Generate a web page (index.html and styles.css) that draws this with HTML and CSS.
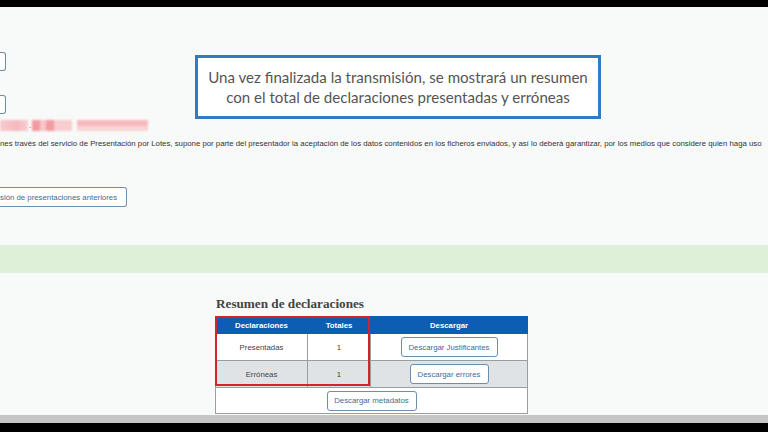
FILE: index.html
```html
<!DOCTYPE html>
<html lang="es">
<head>
<meta charset="utf-8">
<title>Presentación por Lotes</title>
<link rel="stylesheet" href="styles.css">
</head>
<body>
<div class="topbar"></div>
<main class="page">
  <div class="field field-1"></div>
  <div class="field field-2"></div>
  <div class="redacted">
    <span class="blur b1"></span><span class="dot">.</span><span class="blur b2"></span><span class="blur b3"></span>
  </div>
  <p class="notice">nes través del servicio de Presentación por Lotes, supone por parte del presentador la aceptación de los datos contenidos en los ficheros enviados, y así lo deberá garantizar, por los medios que considere quien haga uso</p>
  <button class="btn btn-prev">sión de presentaciones anteriores</button>
  <div class="success-band"></div>
  <section class="summary">
    <h2 class="summary-title">Resumen de declaraciones</h2>
    <div class="table-wrap">
      <table class="summary-table">
        <thead>
          <tr><th class="c1">Declaraciones</th><th class="c2">Totales</th><th class="c3">Descargar</th></tr>
        </thead>
        <tbody>
          <tr class="row-a"><td>Presentadas</td><td>1</td><td><button class="btn btn-table">Descargar Justificantes</button></td></tr>
          <tr class="row-b"><td>Erróneas</td><td>1</td><td><button class="btn btn-table">Descargar errores</button></td></tr>
          <tr class="row-c"><td colspan="3"><button class="btn btn-table">Descargar metadatos</button></td></tr>
        </tbody>
      </table>
      <div class="highlight"></div>
    </div>
  </section>
  <div class="callout"><span class="callout-line">Una vez finalizada la transmisión, se mostrará un resumen</span><span class="callout-line">con el total de declaraciones presentadas y erróneas</span></div>
</main>
<div class="scrollbar"></div>
<div class="bottombar"></div>
</body>
</html>
```

FILE: styles.css
```css
* { box-sizing: border-box; }
html, body { margin: 0; padding: 0; }
body {
  width: 768px;
  height: 432px;
  overflow: hidden;
  background: #f8f9f9;
  font-family: "Liberation Sans", Arial, sans-serif;
  color: #444;
}
.topbar { height: 7px; background: #000; }
.page {
  position: relative;
  height: 408px;
  display: flex;
  flex-direction: column;
  align-items: flex-start;
}
.field {
  width: 6px;
  height: 19px;
  border: 1px solid #6f8aa6;
  border-left: none;
  border-radius: 0 3px 3px 0;
  background: #fff;
}
.field-1 { margin-top: 45px; }
.field-2 { margin-top: 24px; }
.redacted {
  margin-top: 6px;
  height: 11px;
  display: flex;
  align-items: center;
}
.blur { display: block; height: 11px; background: #f6c3c6; filter: blur(1.2px); }
.b1 { width: 28px; background: linear-gradient(90deg, #f7cccf, #f4b9bd 60%, #f7cfd1); }
.dot { font-size: 8px; color: #555; width: 4px; line-height: 11px; padding-left: 1px; }
.b2 { width: 40px; background: linear-gradient(90deg, #f29aa0 0 20%, #f6c6c9 20% 35%, #f29ca1 35% 55%, #f7cdd0 55%); }
.b3 { width: 71px; margin-left: 5px; background: linear-gradient(180deg, #f5b9bd 0 55%, #f8d4d6 55%); }
.notice {
  margin: 8px 0 0;
  font-size: 7.8px;
  line-height: 10px;
  white-space: nowrap;
  color: #333;
}
.btn {
  font-family: "Liberation Sans", Arial, sans-serif;
  background: #fff;
  border: 1px solid #6d8fae;
  border-radius: 3px;
  color: #3f6b97;
  font-size: 7.8px;
  padding: 0;
  height: 20px;
  white-space: nowrap;
  cursor: pointer;
}
.btn-prev {
  margin-top: 38px;
  width: 127px;
  border-left: none;
  border-radius: 0 3px 3px 0;
  text-align: left;
  padding-left: 0;
}
.success-band {
  margin-top: 38px;
  width: 100%;
  height: 28px;
  background: #dff0d8;
}
.summary {
  margin-left: 215px;
  margin-top: 23px;
}
.summary-title {
  margin: 0 0 4px 1px;
  font-family: "Liberation Serif", "Times New Roman", serif;
  font-weight: bold;
  font-size: 13.2px;
  line-height: 16px;
  color: #444;
}
.table-wrap { position: relative; }
.summary-table {
  border-collapse: collapse;
  width: 313px;
  table-layout: fixed;
  font-size: 7.8px;
}
.summary-table th {
  background: #0c5db3;
  color: #fff;
  font-weight: bold;
  height: 17px;
  padding: 0;
  border: 1px solid #0c5db3;
}
.c1 { width: 92px; }
.c2 { width: 63px; }
.summary-table td {
  border: 1px solid #9a9ea3;
  text-align: center;
  padding: 0;
  color: #444;
}
.row-a td, .row-b td { height: 27px; }
.row-c td { height: 26px; background: #fff; }
.row-a td { background: #fff; }
.row-b td { background: #dfe3e6; }
.btn-table { height: 20px; vertical-align: middle; }
.row-a .btn-table { width: 97px; }
.row-b .btn-table { width: 79px; }
.row-c .btn-table { width: 90px; }
.highlight {
  position: absolute;
  left: 0;
  top: 0;
  width: 155px;
  height: 70px;
  border: 2px solid #d3232e;
  pointer-events: none;
}
.callout {
  position: absolute;
  left: 195px;
  top: 48px;
  width: 406px;
  height: 64px;
  border: 3px solid #2f7cc5;
  background: #fff;
  color: #555;
  font-family: Lato, "Open Sans", sans-serif;
  font-size: 15.1px;
  line-height: 20px;
  display: flex;
  flex-direction: column;
  align-items: center;
  justify-content: center;
  white-space: nowrap;
}
.callout-line { display: block; }
.scrollbar { height: 8px; background: #c6c6c6; }
.bottombar { height: 9px; background: #000; }
```
